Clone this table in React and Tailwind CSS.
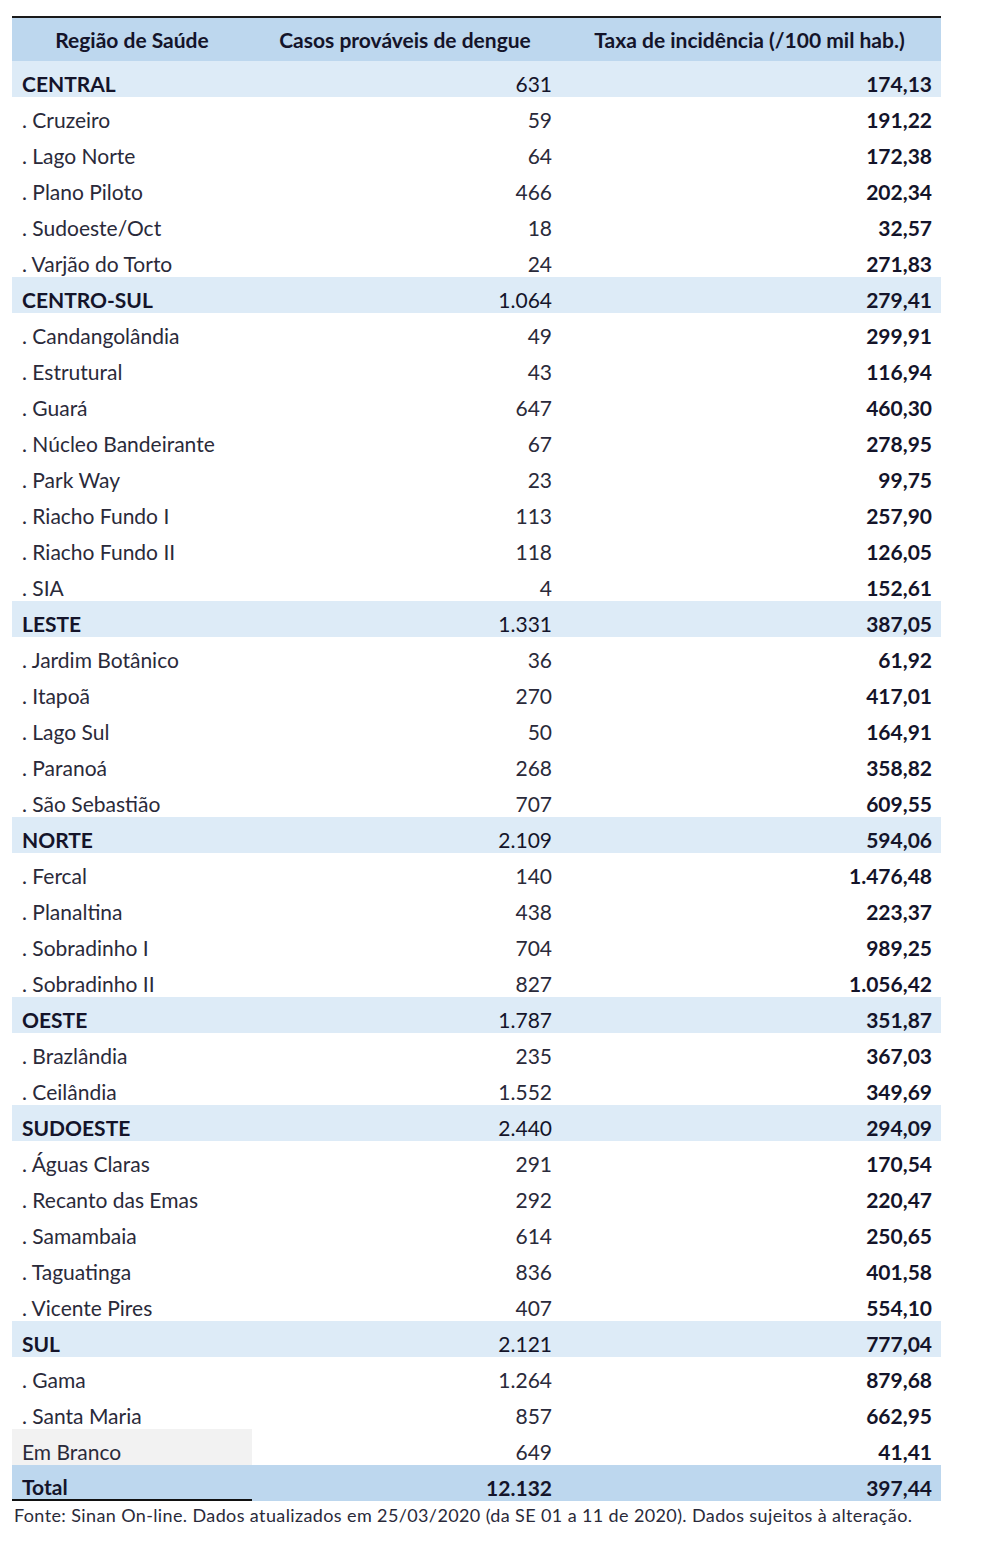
import React from 'react';

const rows = [
  ['CENTRAL', '631', '174,13', 'region'],
  ['. Cruzeiro', '59', '191,22'],
  ['. Lago Norte', '64', '172,38'],
  ['. Plano Piloto', '466', '202,34'],
  ['. Sudoeste/Oct', '18', '32,57'],
  ['. Varjão do Torto', '24', '271,83'],
  ['CENTRO-SUL', '1.064', '279,41', 'region'],
  ['. Candangolândia', '49', '299,91'],
  ['. Estrutural', '43', '116,94'],
  ['. Guará', '647', '460,30'],
  ['. Núcleo Bandeirante', '67', '278,95'],
  ['. Park Way', '23', '99,75'],
  ['. Riacho Fundo I', '113', '257,90'],
  ['. Riacho Fundo II', '118', '126,05'],
  ['. SIA', '4', '152,61'],
  ['LESTE', '1.331', '387,05', 'region'],
  ['. Jardim Botânico', '36', '61,92'],
  ['. Itapoã', '270', '417,01'],
  ['. Lago Sul', '50', '164,91'],
  ['. Paranoá', '268', '358,82'],
  ['. São Sebastião', '707', '609,55'],
  ['NORTE', '2.109', '594,06', 'region'],
  ['. Fercal', '140', '1.476,48'],
  ['. Planaltina', '438', '223,37'],
  ['. Sobradinho I', '704', '989,25'],
  ['. Sobradinho II', '827', '1.056,42'],
  ['OESTE', '1.787', '351,87', 'region'],
  ['. Brazlândia', '235', '367,03'],
  ['. Ceilândia', '1.552', '349,69'],
  ['SUDOESTE', '2.440', '294,09', 'region'],
  ['. Águas Claras', '291', '170,54'],
  ['. Recanto das Emas', '292', '220,47'],
  ['. Samambaia', '614', '250,65'],
  ['. Taguatinga', '836', '401,58'],
  ['. Vicente Pires', '407', '554,10'],
  ['SUL', '2.121', '777,04', 'region'],
  ['. Gama', '1.264', '879,68'],
  ['. Santa Maria', '857', '662,95'],
  ['Em Branco', '649', '41,41', 'blank'],
];

const font = { fontFamily: 'Lato, "Noto Sans", sans-serif' };

const Row = ({ name, cases, rate, kind }) => {
  const region = kind === 'region';
  const bg = region ? 'bg-[#ddebf7]' : '';
  return (
    <>
      <div
        className={`h-[36px] flex items-end pb-[1px] pl-[10px] text-[21px] leading-[24px] ${
          region ? 'font-bold text-[#14142a] ' + bg : 'text-[#2a2a3a]'
        } ${kind === 'blank' ? 'bg-[#f2f2f2]' : ''}`}
      >
        {name}
      </div>
      <div className={`h-[36px] flex items-end justify-end pb-[1px] pr-[6px] text-[21px] leading-[24px] ${region ? 'text-[#14142a] ' + bg : 'text-[#2a2a3a]'}`}>
        {cases}
      </div>
      <div className={`h-[36px] flex items-end justify-end pb-[1px] pr-[9px] text-[21px] leading-[24px] font-bold text-[#14142a] ${bg}`}>
        {rate}
      </div>
    </>
  );
};

export default function App() {
  return (
    <div className="w-[984px] h-[1541px] bg-white pl-[12px] pt-[16px]" style={font}>
      <div className="w-[929px] border-t-2 border-[#1a1a1a]">
        <div className="grid grid-cols-[240px_306px_383px]">
          {/* Header */}
          <div className="h-[43px] bg-[#bdd7ee] flex items-center justify-center text-[21px] font-bold text-[#14142a]">
            Região de Saúde
          </div>
          <div className="h-[43px] bg-[#bdd7ee] flex items-center justify-center text-[21px] font-bold text-[#14142a]">
            Casos prováveis de dengue
          </div>
          <div className="h-[43px] bg-[#bdd7ee] flex items-center justify-center text-[21px] font-bold text-[#14142a]">
            Taxa de incidência (/100 mil hab.)
          </div>

          {rows.map(([name, cases, rate, kind]) => (
            <Row key={name} name={name} cases={cases} rate={rate} kind={kind} />
          ))}

          {/* Total */}
          <div className="h-[36px] bg-[#bdd7ee] border-b-2 border-[#111] flex items-end pl-[10px] text-[21px] leading-[24px] font-bold text-[#14142a]">
            Total
          </div>
          <div className="h-[36px] bg-[#bdd7ee] flex items-end justify-end pb-[1px] pr-[6px] text-[21px] leading-[24px] font-bold text-[#14142a]">
            12.132
          </div>
          <div className="h-[36px] bg-[#bdd7ee] flex items-end justify-end pb-[1px] pr-[9px] text-[21px] leading-[24px] font-bold text-[#14142a]">
            397,44
          </div>
        </div>
      </div>
      <p className="pl-[2px] pt-[3px] text-[18px] leading-[22px] tracking-[0.38px] text-[#2a2a3a]">
        Fonte: Sinan On-line. Dados atualizados em 25/03/2020 (da SE 01 a 11 de 2020). Dados sujeitos à alteração.
      </p>
    </div>
  );
}
